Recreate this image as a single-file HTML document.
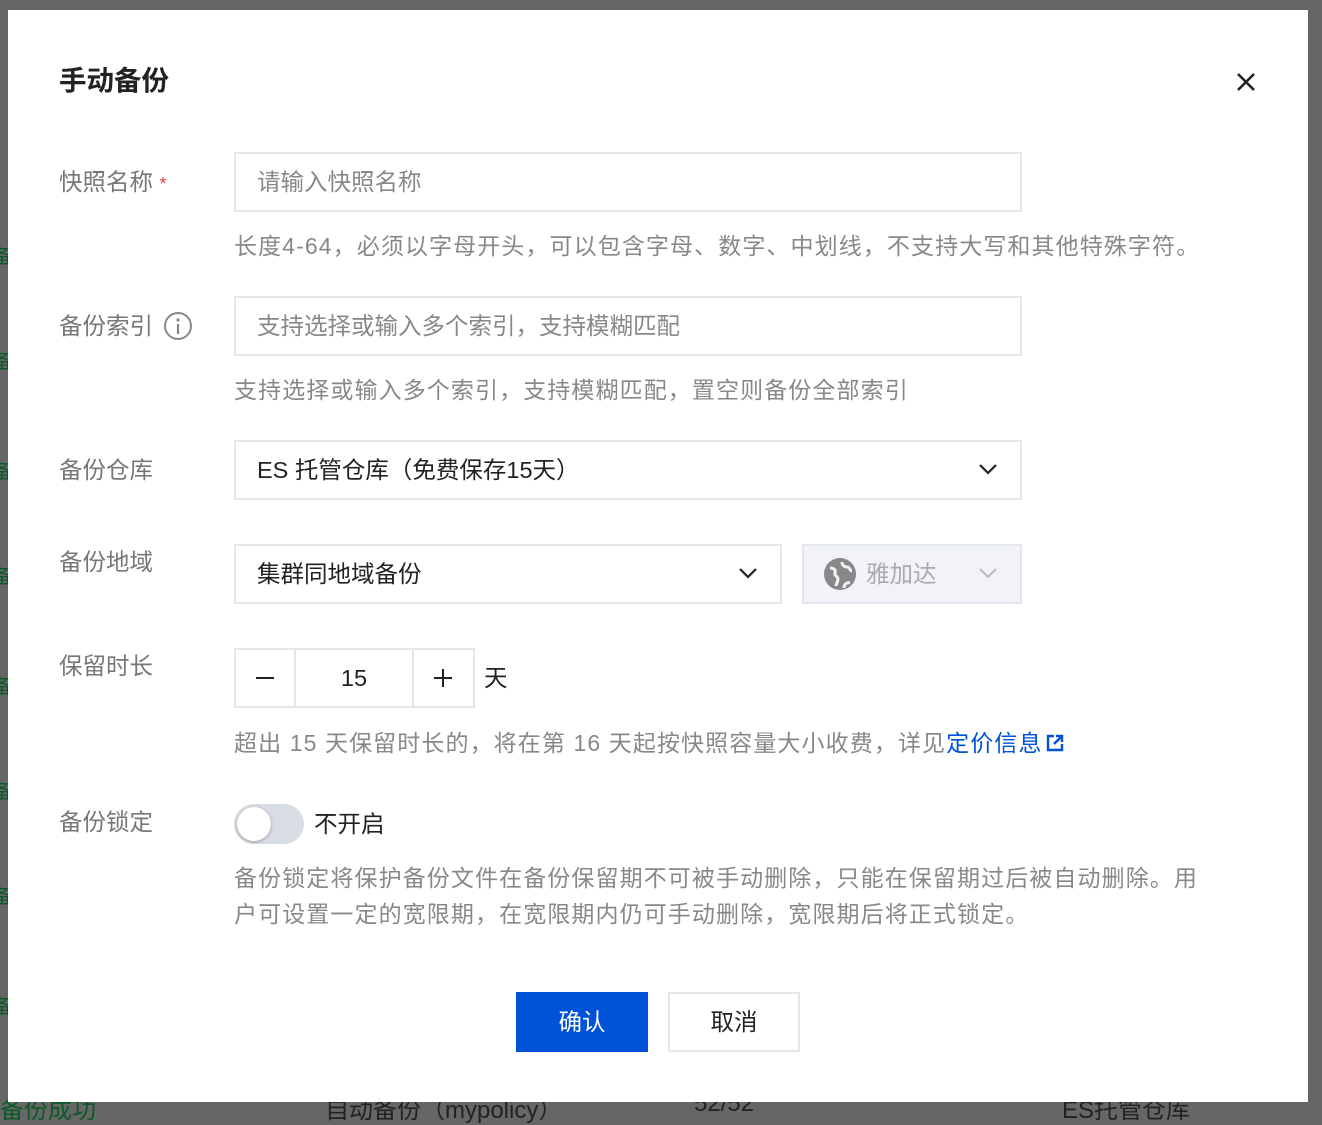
<!DOCTYPE html>
<html><head><meta charset="utf-8"><style>
*{box-sizing:border-box;margin:0;padding:0}
body{width:1322px;height:1110px;background:#666;position:relative;overflow:hidden;font-family:"Liberation Sans","Noto Sans CJK SC",sans-serif;}
.a{position:absolute;white-space:nowrap}
.dlg{position:absolute;left:8px;top:10px;width:1300px;height:1092px;background:#fff}
.lab{position:absolute;left:59px;font-size:23.5px;color:#777;line-height:30px}
.help{position:absolute;left:234px;font-size:23px;letter-spacing:1.1px;color:#888;line-height:36px;white-space:nowrap}
.box{position:absolute;border:2px solid #e3e6eb;background:#fff}
.txt{position:absolute;font-size:23.5px;line-height:30px;white-space:nowrap}
.under{color:#0a5a28;font-size:20px;position:absolute}
</style></head><body>
<div class="a under" style="left:-8px;top:240px">备</div>
<div class="a under" style="left:-8px;top:345px">备</div>
<div class="a under" style="left:-8px;top:455px">备</div>
<div class="a under" style="left:-8px;top:560px">备</div>
<div class="a under" style="left:-8px;top:670px">备</div>
<div class="a under" style="left:-8px;top:775px">备</div>
<div class="a under" style="left:-8px;top:880px">备</div>
<div class="a under" style="left:-8px;top:990px">备</div>
<div class="a" style="left:0;top:1090px;font-size:24px;color:#0a5a28">备份成功</div>
<div class="a" style="left:325px;top:1090px;font-size:24px;color:#222">自动备份（mypolicy）</div>
<div class="a" style="left:694px;top:1090px;font-size:24px;color:#222">52/52</div>
<div class="a" style="left:1062px;top:1090px;font-size:24px;color:#222">ES托管仓库</div>
<div class="dlg"></div>
<div class="a" style="left:59px;top:63px;font-size:27.5px;font-weight:bold;color:#222;line-height:36px">手动备份</div>
<svg class="a" style="left:1236px;top:72px" width="20" height="20" viewBox="0 0 20 20"><path d="M2 2L18 18M18 2L2 18" stroke="#222" stroke-width="2.6"/></svg>

<div class="lab" style="top:167px">快照名称 <span style="color:#e54545;font-size:18px">*</span></div>
<div class="box" style="left:234px;top:152px;width:788px;height:60px"></div>
<div class="txt" style="left:257px;top:167px;color:#888">请输入快照名称</div>
<div class="help" style="top:228px">长度4-64，必须以字母开头，可以包含字母、数字、中划线，不支持大写和其他特殊字符。</div>

<div class="lab" style="top:311px">备份索引</div>
<svg class="a" style="left:163px;top:311px" width="30" height="30" viewBox="0 0 30 30"><circle cx="15" cy="15" r="13" fill="none" stroke="#888" stroke-width="2"/><circle cx="15" cy="9" r="1.6" fill="#888"/><path d="M15 13v10" stroke="#888" stroke-width="2.2"/></svg>
<div class="box" style="left:234px;top:296px;width:788px;height:60px"></div>
<div class="txt" style="left:257px;top:311px;color:#888">支持选择或输入多个索引，支持模糊匹配</div>
<div class="help" style="top:372px">支持选择或输入多个索引，支持模糊匹配，置空则备份全部索引</div>

<div class="lab" style="top:455px">备份仓库</div>
<div class="box" style="left:234px;top:440px;width:788px;height:60px"></div>
<div class="txt" style="left:257px;top:455px;color:#222">ES 托管仓库（免费保存15天）</div>
<svg class="a" style="left:978px;top:462px" width="20" height="14" viewBox="0 0 20 14"><path d="M2 3l8 8 8-8" fill="none" stroke="#222" stroke-width="2.2"/></svg>

<div class="lab" style="top:547px">备份地域</div>
<div class="box" style="left:234px;top:544px;width:548px;height:60px"></div>
<div class="txt" style="left:257px;top:559px;color:#222">集群同地域备份</div>
<svg class="a" style="left:738px;top:566px" width="20" height="14" viewBox="0 0 20 14"><path d="M2 3l8 8 8-8" fill="none" stroke="#222" stroke-width="2.2"/></svg>
<div class="box" style="left:802px;top:544px;width:220px;height:60px;background:#f2f3f8"></div>
<svg class="a" style="left:824px;top:558px" width="32" height="32" viewBox="0 0 32 32"><circle cx="16" cy="16" r="16" fill="#888"/><path d="M6 10c4 0 6 2 5 5s3 3 3 6-2 5-2 7M18 4c0 3 2 5 5 5s3 4 5 4M20 30c0-4 3-6 6-5" fill="none" stroke="#f2f3f8" stroke-width="3"/></svg>
<div class="txt" style="left:866px;top:559px;color:#aaa">雅加达</div>
<svg class="a" style="left:978px;top:566px" width="20" height="14" viewBox="0 0 20 14"><path d="M2 3l8 8 8-8" fill="none" stroke="#bbb" stroke-width="2"/></svg>

<div class="lab" style="top:651px">保留时长</div>
<div class="box" style="left:234px;top:648px;width:241px;height:60px"></div>
<div class="a" style="left:294px;top:648px;width:2px;height:60px;background:#e3e6eb"></div>
<div class="a" style="left:412px;top:648px;width:2px;height:60px;background:#e3e6eb"></div>
<div class="a" style="left:256px;top:677px;width:18px;height:2px;background:#222"></div>
<div class="txt" style="left:296px;width:116px;text-align:center;top:663px;color:#222">15</div>
<div class="a" style="left:434px;top:677px;width:18px;height:2px;background:#222"></div>
<div class="a" style="left:442px;top:669px;width:2px;height:18px;background:#222"></div>
<div class="txt" style="left:484px;top:663px;color:#222">天</div>
<div class="help" style="top:725px">超出 15 天保留时长的，将在第 16 天起按快照容量大小收费，详见<span style="color:#0052d9">定价信息</span></div>
<svg class="a" style="left:1046px;top:734px" width="18" height="18" viewBox="0 0 18 18"><path d="M8 2H2v14h14v-6" fill="none" stroke="#0052d9" stroke-width="2.4"/><path d="M10 2h6v6M16 2L8 10" fill="none" stroke="#0052d9" stroke-width="2.4"/></svg>

<div class="lab" style="top:807px">备份锁定</div>
<div class="a" style="left:234px;top:804px;width:70px;height:40px;border-radius:20px;background:#d8dce3"></div>
<div class="a" style="left:237px;top:807px;width:34px;height:34px;border-radius:17px;background:#fff;box-shadow:0 1px 3px rgba(0,0,0,.3)"></div>
<div class="txt" style="left:314px;top:809px;color:#222">不开启</div>
<div class="help" style="top:860px">备份锁定将保护备份文件在备份保留期不可被手动删除，只能在保留期过后被自动删除。用</div>
<div class="help" style="top:896px">户可设置一定的宽限期，在宽限期内仍可手动删除，宽限期后将正式锁定。</div>

<div class="a" style="left:516px;top:992px;width:132px;height:60px;background:#0052d9;color:#fff;font-size:23.5px;text-align:center;line-height:60px">确认</div>
<div class="a" style="left:668px;top:992px;width:132px;height:60px;border:2px solid #e3e6eb;color:#222;font-size:23.5px;text-align:center;line-height:56px">取消</div>
</body></html>
